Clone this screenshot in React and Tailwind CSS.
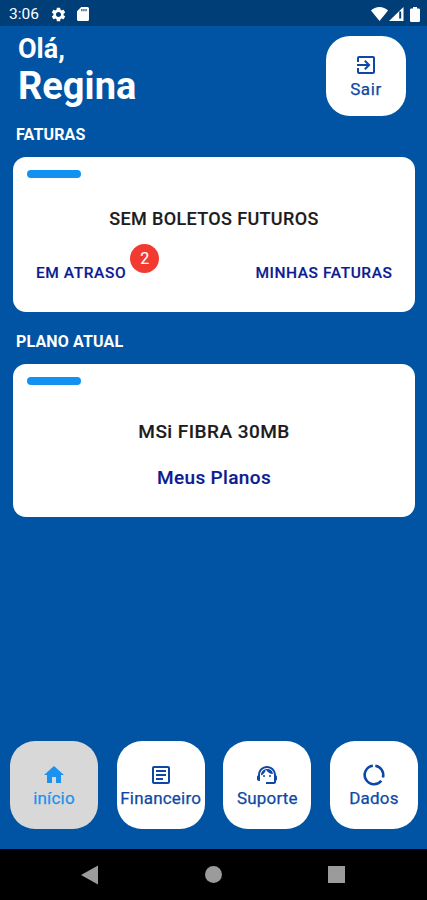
import {
  MdExitToApp,
  MdHome,
  MdOutlineArticle,
  MdSettings,
  MdSupportAgent,
} from "react-icons/md";

function DataIcon({ size }) {
  return (
    <svg width={size} height={size} viewBox="0 0 24 24" fill="none" stroke="currentColor" strokeWidth="2.6">
      <path d="M13.300 2.700a9.300 9.300 0 0 1 7.600 11.800" />
      <path d="M19.300 17.700A9.300 9.300 0 1 1 10.900 2.700" />
    </svg>
  );
}

const tabs = [
  { label: "início", icon: MdHome, active: true },
  { label: "Financeiro", icon: MdOutlineArticle },
  { label: "Suporte", icon: MdSupportAgent },
  { label: "Dados", icon: DataIcon },
];

function StatusBar() {
  return (
    <div className="flex h-[26px] items-center justify-between bg-[#003e78] pl-[9px] pr-[5px] pt-[2px] text-white">
      <div className="flex items-center">
        <span className="w-[41px] pt-px text-[15.5px] leading-none">3:06</span>
        <MdSettings size={17} />
        {/* SD card */}
        <svg width="12" height="14" viewBox="0 0 12 14" className="ml-[10px]">
          <path
            d="M4.200 0h6.300A1.500 1.500 0 0 1 12 1.500v11a1.500 1.500 0 0 1-1.500 1.500h-9A1.500 1.500 0 0 1 0 12.500V4.200z"
            fill="#fff"
          />
          <path d="M4.300 2h1.100v2.200H4.300zM6.400 2h1.100v2.200H6.400zM8.500 2h1.100v2.200H8.500z" fill="#003e78" />
        </svg>
      </div>
      <div className="flex items-center">
        {/* Wifi */}
        <svg width="17" height="14" viewBox="0 0 17 14" fill="currentColor">
          <path d="M8.500 14 0 3.600C2.300 1.300 5.200 0 8.500 0s6.200 1.300 8.500 3.600z" />
        </svg>
        {/* Mobile signal */}
        <svg width="15" height="14" viewBox="0 0 15 14" className="ml-[1px]">
          <path d="M0 14 14.500 0v14z" fill="#fff" />
          <path d="M10.200 4.500h2v7h-2z" fill="#003e78" />
        </svg>
        <svg width="10" height="15" viewBox="0 0 10 15" fill="currentColor" className="ml-[6px] mr-[2px]">
          <path d="M3 0h4v1.500h1.800q1.200 0 1.200 1.200v11.100q0 1.200-1.200 1.200H1.200Q0 15 0 13.800V2.700q0-1.200 1.200-1.200H3z" />
        </svg>
      </div>
    </div>
  );
}

function Card({ className, children }) {
  return (
    <div className={`ml-[13px] mr-[12px] rounded-[13px] bg-white px-[14px] pt-[13px] ${className}`}>
      <div className="h-[8px] w-[54px] rounded-full bg-[#1191f0]" />
      {children}
    </div>
  );
}

function Tab({ label, icon: Icon, active }) {
  return (
    <button
      className={`flex h-[88px] w-[88px] flex-col items-center rounded-[25px] pt-[22px] ${
        active ? "bg-[#d8d8d8] text-[#1c92ee]" : "bg-white text-[#0e48a5]"
      }`}
    >
      <Icon size={24} />
      <span className="mt-[1px] whitespace-nowrap text-[17px] leading-[20px] tracking-[0.2px] [-webkit-text-stroke:0.25px]">
        {label}
      </span>
    </button>
  );
}

export default function App() {
  return (
    <div className="flex h-[900px] w-[427px] flex-col bg-[#0054a3] font-['Roboto',sans-serif]">
      <StatusBar />

      {/* Greeting */}
      <header className="flex h-[90px] items-start justify-between pl-[18px] pr-[21px] pt-[10px] font-bold text-white">
        <h1>
          <span className="-mt-[2px] block text-[27px] leading-[30px]">Olá,</span>
          <span className="block text-[38px] leading-[45px]">Regina</span>
        </h1>
        <button className="flex h-[80px] w-[80px] flex-col items-center rounded-[24px] bg-white pt-[17px] font-normal text-[#0e48a5]">
          <MdExitToApp size={24} />
          <span className="mt-[2px] text-[17px] leading-[20px] tracking-[0.6px] [-webkit-text-stroke:0.25px]">
            Sair
          </span>
        </button>
      </header>

      <main className="flex-1">
        <h2 className="mt-[9px] h-[32px] pl-[16px] text-[16px] font-bold leading-[20px] tracking-[0.15px] text-white">
          FATURAS
        </h2>
        <Card className="h-[155px]">
          <p className="mt-[30px] text-center text-[18px] font-medium leading-[22px] tracking-[0.35px] text-[#1c1c1c] [-webkit-text-stroke:0.15px]">
            SEM BOLETOS FUTUROS
          </p>
          <div className="mt-[33px] flex justify-between pl-[9px] pr-[8.5px] text-[15.5px] font-medium leading-[20px] tracking-[0.57px] text-[#0d1b92] [-webkit-text-stroke:0.15px]">
            <div className="relative">
              EM ATRASO
              <span className="absolute -right-[33px] -top-[19px] flex h-[29px] w-[29px] items-center justify-center rounded-full bg-[#f23a30] text-[16px] font-normal tracking-normal text-white">
                2
              </span>
            </div>
            <div>MINHAS FATURAS</div>
          </div>
        </Card>

        <h2 className="mt-[20px] h-[32px] pl-[16px] text-[16px] font-bold leading-[20px] tracking-[0.15px] text-white">
          PLANO ATUAL
        </h2>
        <Card className="h-[153px] text-center font-medium [-webkit-text-stroke:0.15px]">
          <p className="mt-[35px] text-[19px] leading-[24px] tracking-[0.45px] text-[#1c1c1c]">
            MSi FIBRA 30MB
          </p>
          <p className="mt-[22px] text-[19px] leading-[24px] tracking-[0.35px] text-[#0d1b92]">
            Meus Planos
          </p>
        </Card>
      </main>

      <nav className="flex justify-between pb-[20px] pl-[10px] pr-[9px]">
        {tabs.map((tab) => (
          <Tab key={tab.label} {...tab} />
        ))}
      </nav>

      {/* Android navigation */}
      <div className="flex h-[51px] items-center bg-black pl-[81px] text-[#9b9b9b]">
        <svg width="17" height="20" viewBox="0 0 17 20" fill="currentColor">
          <path d="M17 0.500v19L0 10z" />
        </svg>
        <div className="ml-[107px] h-[17px] w-[17px] rounded-full bg-current" />
        <div className="ml-[106px] h-[17px] w-[17px] bg-current" />
      </div>
    </div>
  );
}
